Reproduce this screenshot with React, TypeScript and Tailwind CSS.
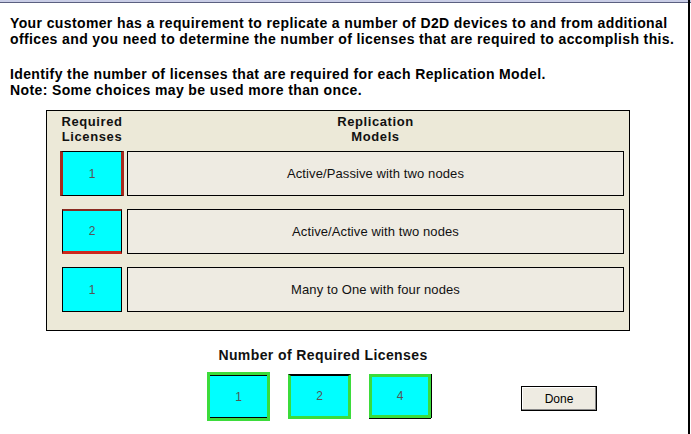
import React from "react";

const font = { fontFamily: '"Liberation Sans", Arial, sans-serif' };

function ModelRow({
  value,
  label,
  boxClass,
  mt,
}: {
  value: string;
  label: string;
  boxClass: string;
  mt: string;
}) {
  return (
    <div className={`flex items-stretch ${mt}`}>
      <div className="flex w-[64px] justify-center">
        <div className={`flex items-center justify-center bg-[#00ffff] text-[12px] text-[#555] ${boxClass}`}>
          {value}
        </div>
      </div>
      <div className="ml-[3px] flex h-[45px] w-[497px] items-center justify-center border border-black bg-[#eeebe2] text-[13px] tracking-[0.1px] text-[#111]">
        {label}
      </div>
    </div>
  );
}

export default function App() {
  return (
    <div className="relative h-[434px] w-[691px] overflow-hidden bg-white" style={font}>
      <div className="h-[2px] w-full bg-[#c9cde6]" />
      <div className="h-[1px] w-full bg-[#5a5f80]" />
      <div className="absolute right-[1px] top-0 h-full w-[2px] bg-black" />
      <div className="pl-[10px] pt-[12px] text-[14px] font-bold leading-[16px] tracking-[0.38px] text-black">
        <p>Your customer has a requirement to replicate a number of D2D devices to and from additional</p>
        <p>offices and you need to determine the number of licenses that are required to accomplish this.</p>
        <p className="mt-[19px]">Identify the number of licenses that are required for each Replication Model.</p>
        <p>Note: Some choices may be used more than once.</p>
      </div>
      <div className="ml-[46px] mt-[12px] h-[221px] w-[584px] border border-black bg-[#ece9d8] pl-[13px] pt-[3px]">
        <div className="flex text-[13px] font-bold leading-[15px] tracking-[0.6px] text-[#111]">
          <div className="w-[64px] text-center">
            <div>Required</div>
            <div>Licenses</div>
          </div>
          <div className="ml-[3px] w-[497px] text-center">
            <div>Replication</div>
            <div>Models</div>
          </div>
        </div>
        <ModelRow
          value="1"
          label="Active/Passive with two nodes"
          mt="mt-[7px]"
          boxClass="h-[45px] w-[64px] border-y border-x-[3px] border-y-black border-x-[#a52a1e]"
        />
        <ModelRow
          value="2"
          label="Active/Active with two nodes"
          mt="mt-[13px]"
          boxClass="h-[45px] w-[60px] border-t-[2px] border-b-[3px] border-x border-t-[#8a2a20] border-b-[#cc2a1e] border-x-black"
        />
        <ModelRow
          value="1"
          label="Many to One with four nodes"
          mt="mt-[13px]"
          boxClass="h-[45px] w-[60px] border border-black"
        />
      </div>
      <div className="mt-[14px] w-[646px] text-center text-[14px] font-bold tracking-[0.4px] text-[#111]">
        Number of Required Licenses
      </div>
      <div className="relative mt-[6px] flex items-start">
        <div className="ml-[207px] flex h-[49px] w-[63px] items-center justify-center border-[3px] border-[#3bdc3b] bg-[#00ffff] text-[12px] text-[#555] shadow-[inset_0_1px_0_#000,inset_0_-1px_0_#000]">
          1
        </div>
        <div className="ml-[18px] mt-[2px] flex h-[45px] w-[63px] items-center justify-center border-[3px] border-[#3bdc3b] border-t-black border-t-[2px] bg-[#00ffff] text-[12px] text-[#555]">
          2
        </div>
        <div className="ml-[18px] mt-[2px] flex h-[44px] w-[62px] items-center justify-center border-[3px] border-[#3bdc3b] bg-[#00ffff] text-[12px] text-[#555] shadow-[0_1px_0_#000,1px_0_0_#000]">
          4
        </div>
        <button className="ml-[90px] mt-[14px] h-[25px] w-[76px] border border-black bg-[#eeebe2] text-[12px] text-black shadow-[inset_-1px_-1px_0_#888,inset_1px_1px_0_#fff]">
          Done
        </button>
      </div>
    </div>
  );
}
